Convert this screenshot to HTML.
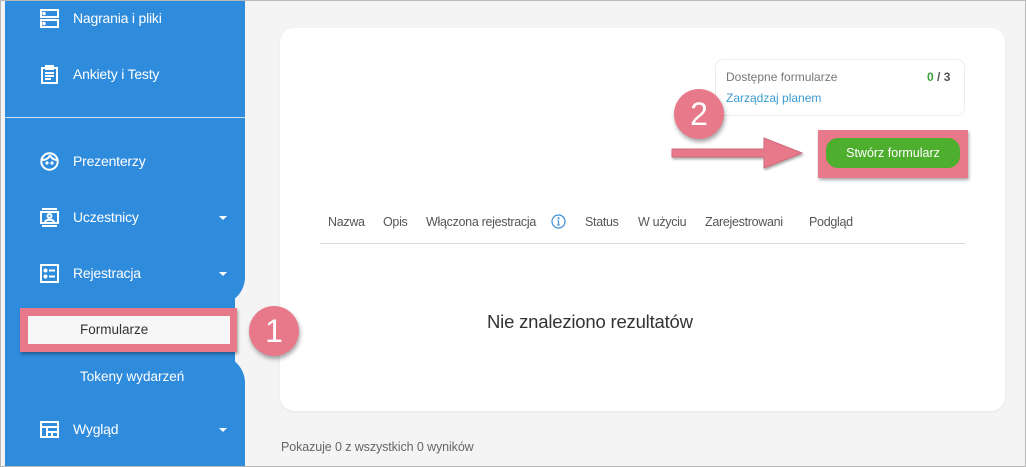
<!DOCTYPE html>
<html><head><meta charset="utf-8"><style>
*{margin:0;padding:0;box-sizing:border-box}
body{width:1026px;height:467px;overflow:hidden;background:#f4f4f4;font-family:"Liberation Sans",sans-serif;position:relative}
.frame{position:absolute;left:0;top:0;width:1026px;height:467px;border:1px solid #b8b8b8;pointer-events:none;z-index:20}
.a{position:absolute;white-space:nowrap}
.sb{position:absolute;background:#2f8bdc}
.nav{position:absolute;left:73px;color:#fff;font-size:14px;letter-spacing:-.2px}
.ic{position:absolute;left:40px;width:19px;height:19px}
.car{position:absolute;left:219px;width:0;height:0;border-left:4px solid transparent;border-right:4px solid transparent;border-top:4px solid #fff}
.th{position:absolute;top:215px;font-size:12.5px;color:#555;letter-spacing:-.3px}
.num{position:absolute;width:50px;height:50px;border-radius:50%;background:#e8798a;box-shadow:1px 3px 4px rgba(0,0,0,.35);color:#fff;font-size:32px;text-align:center;line-height:50px;z-index:10}
</style></head><body>
<div class="sb" style="left:5px;top:0;width:240px;height:305px;border-bottom-right-radius:28px"></div>
<div class="sb" style="left:5px;top:290px;width:230px;height:80px"></div>
<div class="sb" style="left:5px;top:355px;width:240px;height:112px;border-top-right-radius:28px"></div>
<div class="a" style="left:5px;top:117px;width:240px;height:1px;background:#cfe4f7"></div>

<svg class="ic" style="top:9px" viewBox="0 0 19 19" fill="none" stroke="#fff" stroke-width="2"><rect x="1" y="1" width="17" height="7"/><rect x="1" y="11" width="17" height="7"/><circle cx="4" cy="4.5" r=".8" fill="#fff"/><circle cx="4" cy="14.5" r=".8" fill="#fff"/></svg>
<div class="nav" style="top:10px">Nagrania i pliki</div>
<svg class="ic" style="top:65px" viewBox="0 0 19 19" fill="none" stroke="#fff" stroke-width="2"><rect x="2" y="3" width="15" height="15"/><rect x="6" y="1" width="7" height="3" fill="#fff"/><path d="M5 8h9M5 11h9M5 14h6"/></svg>
<div class="nav" style="top:66px">Ankiety i Testy</div>
<svg class="ic" style="top:152px" viewBox="0 0 19 19" fill="none" stroke="#fff" stroke-width="2"><circle cx="9.5" cy="9.5" r="8.2"/><path d="M2 8c4 0 7-2 8-5M10 3c1 3 4 5 7 5"/><circle cx="7" cy="11" r=".6" fill="#fff"/><circle cx="12" cy="11" r=".6" fill="#fff"/></svg>
<div class="nav" style="top:153px">Prezenterzy</div>
<svg class="ic" style="top:208px" viewBox="0 0 19 19" fill="none" stroke="#fff" stroke-width="2"><path d="M2 1h15"/><rect x="1" y="4" width="17" height="11"/><path d="M2 18h15"/><circle cx="9.5" cy="8" r="2"/><path d="M5 14c1-3 8-3 9 0"/></svg>
<div class="nav" style="top:209px">Uczestnicy</div><div class="car" style="top:216px"></div>
<svg class="ic" style="top:264px" viewBox="0 0 19 19" fill="none" stroke="#fff" stroke-width="2"><rect x="1" y="1" width="17" height="17"/><circle cx="5.5" cy="6.5" r="1" fill="#fff"/><circle cx="5.5" cy="12.5" r="1" fill="#fff"/><path d="M9 6.5h6M9 12.5h6"/></svg>
<div class="nav" style="top:265px">Rejestracja</div><div class="car" style="top:272px"></div>

<div class="a" style="left:20px;top:308px;width:217px;height:44px;background:#e8798a;box-shadow:1px 2px 3px rgba(0,0,0,.35)"></div>
<div class="a" style="left:28px;top:316px;width:202px;height:28px;background:#f7f7f7"></div>
<div class="a" style="left:80px;top:322px;font-size:13.5px;color:#333">Formularze</div>
<div class="a" style="left:80px;top:369px;font-size:13.5px;color:#fff">Tokeny wydarzeń</div>
<svg class="ic" style="top:420px" viewBox="0 0 19 19" fill="none" stroke="#fff" stroke-width="2"><rect x="1" y="2" width="17" height="15"/><path d="M1 7h17M7 7v10M7 12h11M12 12v5"/></svg>
<div class="nav" style="top:421px">Wygląd</div><div class="car" style="top:428px"></div>

<div class="a" style="left:280px;top:28px;width:725px;height:383px;background:#fff;border-radius:14px;box-shadow:0 1px 3px rgba(0,0,0,.06)"></div>
<div class="num" style="left:249px;top:306px">1</div>
<div class="a" style="left:715px;top:59px;width:250px;height:57px;border:1px solid #ececec;border-radius:8px;background:#fff"></div>
<div class="a" style="left:726px;top:70px;font-size:12px;color:#777">Dostępne formularze</div>
<div class="a" style="left:927px;top:70px;font-size:12px;font-weight:bold;color:#555"><span style="color:#3aa23a">0</span> / 3</div>
<div class="a" style="left:726px;top:91px;font-size:12px;color:#3b9bd1">Zarządzaj planem</div>

<div class="a" style="left:818px;top:130px;width:150px;height:48px;background:#e8798a;box-shadow:1px 2px 3px rgba(0,0,0,.35)"></div>
<div class="a" style="left:826px;top:138px;width:134px;height:30px;background:#4eae2e;border-radius:12px;color:#fff;font-size:12.5px;text-align:center;line-height:30px">Stwórz formularz</div>
<svg class="a" style="left:668px;top:135px" width="140" height="36"><path d="M4 14h92v-11l38 15-38 15v-11h-92z" fill="#e8798a" stroke="#d0697a" stroke-width="1" filter="drop-shadow(1px 2px 1px rgba(0,0,0,.3))"/></svg>
<div class="num" style="left:674px;top:89px">2</div>

<div class="th" style="left:328px">Nazwa</div>
<div class="th" style="left:383px">Opis</div>
<div class="th" style="left:426px">Włączona rejestracja</div>
<svg class="a" style="left:551px;top:214px" width="15" height="15" viewBox="0 0 15 15" fill="none" stroke="#3b8fd6" stroke-width="1.2"><circle cx="7.5" cy="7.5" r="6.5"/><path d="M7.5 6.5v4.5M6.3 11h2.4M6.5 6.5h1"/><circle cx="7.5" cy="4.3" r=".5" fill="#3b8fd6"/></svg>
<div class="th" style="left:585px">Status</div>
<div class="th" style="left:638px">W użyciu</div>
<div class="th" style="left:705px">Zarejestrowani</div>
<div class="th" style="left:809px">Podgląd</div>
<div class="a" style="left:320px;top:243px;width:645px;height:1px;background:#dcdcdc"></div>
<div class="a" style="left:487px;top:311px;font-size:18.5px;color:#333;letter-spacing:-.2px">Nie znaleziono rezultatów</div>
<div class="a" style="left:281px;top:440px;font-size:12.5px;color:#666;letter-spacing:-.1px">Pokazuje 0 z wszystkich 0 wyników</div>
<div class="frame"></div>
</body></html>
